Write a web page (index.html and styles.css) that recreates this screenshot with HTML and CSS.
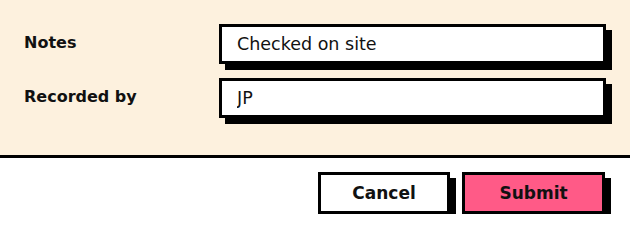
FILE: index.html
```html
<!DOCTYPE html>
<html lang="en">
<head>
    <meta charset="UTF-8">
    <title>Record form</title>
    <link rel="stylesheet" href="styles.css">
</head>
<body>
    <form class="record-form">
        <div class="fields">
            <label class="field-label" for="notes">Notes</label>
            <input class="field-input" id="notes" type="text" value="Checked on site">

            <label class="field-label" for="recorded-by">Recorded by</label>
            <input class="field-input" id="recorded-by" type="text" value="JP">
        </div>

        <div class="actions">
            <button class="btn btn-cancel" type="button">Cancel</button>
            <button class="btn btn-submit" type="submit">Submit</button>
        </div>
    </form>
</body>
</html>
```

FILE: styles.css
```css
/* Form with chunky offset shadows */
body {
    margin: 0;
    background-color: #fff;
    font-family: "DejaVu Sans", Inter, sans-serif;
    color: #111;
}
.fields {
    display: grid;
    grid-template-columns: 195px 1fr;
    row-gap: 14px;
    align-items: center;
    padding: 24px 24px 37px;
    background-color: #fdf1de;
    border-bottom: 3px solid #000;
}
.field-label {
    font-size: 16px;
    font-weight: 700;
    margin-top: -4px;
}
.field-input {
    box-sizing: border-box;
    width: 100%;
    height: 40px;
    padding: 0 15px;
    border: 3px solid #000;
    border-radius: 0;
    background-color: #fff;
    box-shadow: 6px 6px 0 #000;
    font-family: inherit;
    font-size: 17.5px;
    color: #111;
    outline: none;
}
.actions {
    display: flex;
    justify-content: flex-end;
    gap: 12px;
    padding: 14px 25px 0;
}
.btn {
    box-sizing: border-box;
    height: 42px;
    border: 3px solid #000;
    border-radius: 0;
    box-shadow: 6px 6px 0 #000;
    font-family: inherit;
    font-size: 17px;
    font-weight: 700;
    color: #111;
    cursor: pointer;
}
.btn-cancel {
    width: 132px;
    background-color: #fff;
}
.btn-submit {
    width: 143px;
    background-color: #ff5a87;
}
```
